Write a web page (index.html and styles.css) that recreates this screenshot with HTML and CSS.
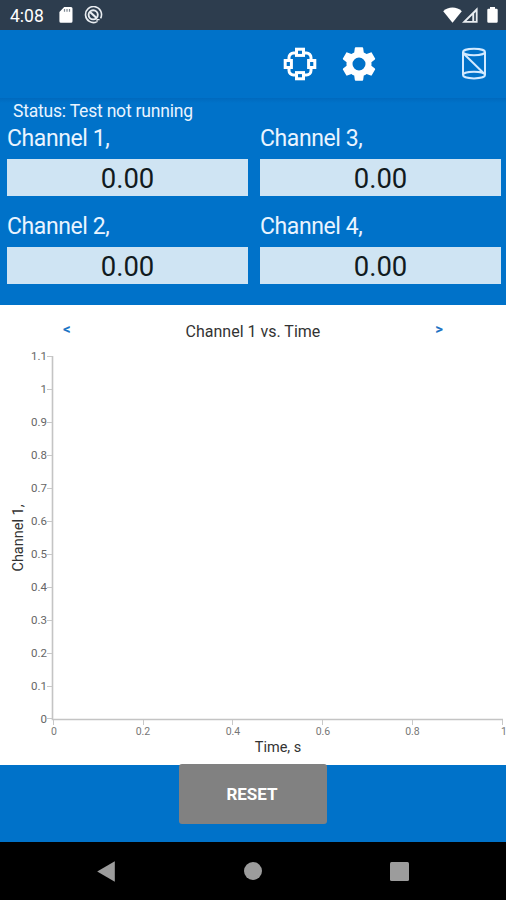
FILE: index.html
```html
<!DOCTYPE html>
<html lang="en">
<head>
  <meta charset="UTF-8">
  <meta name="viewport" content="width=device-width, initial-scale=1.0">
  <title>Channel Monitor</title>
  <link rel="stylesheet" href="styles.css">
</head>
<body>
  <div class="screen">
    <div class="status-bar">
      <span class="clock">4:08</span>
      <svg class="icon-sd" width="14" height="16" viewBox="0 0 14 16">
        <path fill="#fff" d="M5.2 0H12a1.500 1.500 0 0 1 1.500 1.500v12.800a1.500 1.500 0 0 1-1.500 1.500H1.900a1.500 1.500 0 0 1-1.500-1.500V5z"/>
        <path stroke="#7d8791" stroke-width="1.200" d="M5.500 2v2.800M8 2v2.800M10.500 2v2.800"/>
      </svg>
      <svg class="icon-sync" width="19" height="18" viewBox="0 0 19 18" fill="none" stroke="#e9edf1">
        <path stroke-width="1.600" d="M12.500 16A8 8 0 1 1 16.600 12.300"/>
        <circle cx="9.200" cy="8.800" r="4.600" stroke-width="1.900"/>
        <path stroke-width="2.200" d="M6 6l6.600 6"/>
        <path stroke-width="1.200" d="M13 16.200v-2.600h2.600"/>
      </svg>
      <div class="signals">
        <svg width="19" height="16" viewBox="0 0 19 16"><path fill="#fff" d="M9.500 15.700L.2 4.300C5 -.7 14-.7 18.800 4.300z"/></svg>
        <svg width="16" height="16" viewBox="0 0 16 16"><path fill="#e9edf1" fill-rule="evenodd" d="M0 15.800L15.600.2v15.600zM10.300 8.200L4.500 14h5.800zM12.200 6.500v7.500h1.600V5z"/></svg>
        <svg class="icon-battery" width="11" height="16" viewBox="0 0 11 16"><path fill="#fff" d="M3 0h5v1.800h1.500a1.200 1.200 0 0 1 1.200 1.200v11.500a1.200 1.200 0 0 1-1.200 1.200h-8A1.200 1.200 0 0 1 .3 14.500V3a1.200 1.200 0 0 1 1.200-1.200H3z"/></svg>
      </div>
    </div>

    <div class="toolbar">
      <!-- connect -->
      <svg class="icon-connect" width="34" height="34" viewBox="0 0 34 34" fill="none" stroke="#fff" stroke-width="3">
        <path d="M12.500 6H10.500a4.500 4.500 0 0 0-4.500 4.500V12.500M21.500 6h2a4.500 4.500 0 0 1 4.500 4.500V12.500M12.500 28H10.500a4.500 4.500 0 0 1-4.500-4.500V21.500M21.500 28h2a4.500 4.500 0 0 0 4.500-4.500V21.500"/>
        <rect x="13.500" y="2.200" width="7" height="6.200"/>
        <rect x="13.500" y="25.600" width="7" height="6.200"/>
        <rect x="2.200" y="13.500" width="6.200" height="7"/>
        <rect x="25.600" y="13.500" width="6.200" height="7"/>
      </svg>
      <!-- settings -->
      <svg class="icon-settings" width="40" height="40" viewBox="0 0 24 24">
        <path fill="#fff" d="M19.430 12.980c.04-.32.07-.64.07-.98s-.03-.66-.07-.98l2.110-1.650c.19-.15.24-.42.12-.64l-2-3.460c-.12-.22-.39-.3-.61-.22l-2.490 1c-.52-.4-1.080-.73-1.690-.98l-.38-2.650C14.460 2.180 14.250 2 14 2h-4c-.25 0-.46.18-.49.42l-.38 2.650c-.61.25-1.170.59-1.690.98l-2.490-1c-.23-.09-.49 0-.61.22l-2 3.460c-.13.22-.07.49.12.64l2.110 1.650c-.04.32-.07.65-.07.98s.03.66.07.98l-2.110 1.650c-.19.15-.24.42-.12.64l2 3.460c.12.22.39.3.61.22l2.490-1c.52.4 1.080.73 1.690.98l.38 2.650c.03.24.24.42.49.42h4c.25 0 .46-.18.49-.42l.38-2.650c.61-.25 1.170-.59 1.690-.98l2.490 1c.23.09.49 0 .61-.22l2-3.460c.12-.22.07-.49-.12-.64l-2.110-1.650zM12 15.900a3.900 3.900 0 1 1 0-7.800 3.900 3.900 0 0 1 0 7.800z"/>
      </svg>
      <!-- specimen -->
      <svg class="icon-specimen" width="26" height="34" viewBox="0 0 26 34" fill="none" stroke="#d3eaff" stroke-width="2">
        <ellipse cx="13" cy="5" rx="11" ry="3.200"/>
        <path d="M2 5v23c0 4.500 22 4.500 22 0V5M2 28c0-4.500 22-4.500 22 0M2.500 6.500l21 20.500"/>
      </svg>
    </div>

    <div class="readings">
      <div class="test-status">Status: Test not running</div>
      <div class="channels">
        <div class="channel">
          <div class="channel-name">Channel 1,</div>
          <div class="channel-value">0.00</div>
        </div>
        <div class="channel">
          <div class="channel-name">Channel 3,</div>
          <div class="channel-value">0.00</div>
        </div>
        <div class="channel">
          <div class="channel-name">Channel 2,</div>
          <div class="channel-value">0.00</div>
        </div>
        <div class="channel">
          <div class="channel-name">Channel 4,</div>
          <div class="channel-value">0.00</div>
        </div>
      </div>
    </div>

    <div class="chart-panel">
      <div class="chart-header">
        <span class="chart-arrow">&lt;</span>
        <span class="chart-title">Channel 1 vs. Time</span>
        <span class="chart-arrow">&gt;</span>
      </div>
      <svg class="chart" width="506" height="410" viewBox="0 350 506 410">
        <path class="axis" d="M52.500 356V719.500H503"/>
        <path class="tick" d="M47 356.500h5M47 389.500h5M47 422.500h5M47 455.500h5M47 488.500h5M47 521.500h5M47 554.500h5M47 587.500h5M47 620.500h5M47 653.500h5M47 686.500h5M47 718.500h5"/>
        <path class="tick" d="M53.500 720v5M143.500 720v5M232.500 720v5M322.500 720v5M412.500 720v5M502.500 720v5"/>
        <g class="labels-y">
          <text x="47" y="360">1.1</text>
          <text x="47" y="393">1</text>
          <text x="47" y="426">0.9</text>
          <text x="47" y="459">0.8</text>
          <text x="47" y="492">0.7</text>
          <text x="47" y="525">0.6</text>
          <text x="47" y="558">0.5</text>
          <text x="47" y="591">0.4</text>
          <text x="47" y="624">0.3</text>
          <text x="47" y="657">0.2</text>
          <text x="47" y="690">0.1</text>
          <text x="47" y="723">0</text>
        </g>
        <g class="labels-x">
          <text x="54" y="734.500">0</text>
          <text x="143" y="734.500">0.2</text>
          <text x="233" y="734.500">0.4</text>
          <text x="323" y="734.500">0.6</text>
          <text x="412.500" y="734.500">0.8</text>
          <text x="504" y="734.500">1</text>
        </g>
        <text class="axis-title" x="278" y="751.500">Time, s</text>
        <text class="axis-title" transform="translate(23 538) rotate(-90)">Channel 1,</text>
      </svg>
    </div>

    <div class="footer">
      <button class="reset-btn">RESET</button>
    </div>

    <div class="nav-bar">
      <svg width="18" height="21" viewBox="0 0 18 21"><path fill="#9c9c9c" d="M17.800.3v20.400L.2 10.500z"/></svg>
      <svg width="18" height="18" viewBox="0 0 18 18"><circle cx="9" cy="9" r="9" fill="#9c9c9c"/></svg>
      <svg width="19" height="19" viewBox="0 0 19 19"><rect width="19" height="19" rx="1.500" fill="#9c9c9c"/></svg>
    </div>
  </div>
</body>
</html>
```

FILE: styles.css
```css
html, body {
  margin: 0;
  padding: 0;
  background: #000;
  font-family: Roboto, 'Noto Sans', sans-serif;
}
svg {
  display: block;
  flex: none;
}
.screen {
  width: 506px;
  height: 900px;
  display: flex;
  flex-direction: column;
  overflow: hidden;
}
.status-bar {
  height: 30px;
  box-sizing: border-box;
  padding: 0 8px 0 10px;
  display: flex;
  align-items: center;
  background: #2d3d4e;
  color: #fff;
}
.clock {
  width: 49px;
  font-size: 17.5px;
  line-height: 30px;
  padding-top: 2px;
}
.icon-sync {
  margin-left: 11px;
}
.signals {
  display: flex;
  margin-left: auto;
}
.icon-battery {
  margin-left: 9px;
}
.toolbar {
  height: 68px;
  box-sizing: border-box;
  padding-right: 19px;
  display: flex;
  align-items: center;
  justify-content: flex-end;
  background: #0072c9;
}
.icon-connect {
  margin-right: 22px;
}
.icon-settings {
  margin-right: 82px;
}
.readings {
  height: 207px;
  background: linear-gradient(#0069bd, #0072c9 5px);
  color: #e9f4ff;
}
.test-status {
  height: 27px;
  padding-left: 13px;
  font-size: 17.5px;
  letter-spacing: -0.2px;
  line-height: 27px;
}
.channels {
  display: grid;
  grid-template-columns: 241px 241px;
  column-gap: 12px;
  row-gap: 17px;
  padding-left: 7px;
}
.channel-name {
  height: 34px;
  font-size: 23px;
  letter-spacing: -0.4px;
  line-height: 27px;
}
.channel-value {
  height: 37px;
  background: #cfe4f3;
  color: #111a20;
  font-size: 27.5px;
  line-height: 39px;
  text-align: center;
}
.chart-panel {
  height: 460px;
  background: #fff;
}
.chart-header {
  height: 45px;
  box-sizing: border-box;
  padding: 10px 63px 0;
  display: flex;
  justify-content: space-between;
}
.chart-arrow {
  color: #1c74c4;
  font-size: 15px;
  font-weight: 700;
  line-height: 28px;
}
.chart-title {
  color: #333;
  font-size: 16px;
  line-height: 34px;
}
.axis {
  fill: none;
  stroke: #c4c4c4;
  stroke-width: 1.6;
}
.tick {
  stroke: #c8c8c8;
}
.labels-y {
  font-size: 11.5px;
  fill: #666;
  text-anchor: end;
}
.labels-x {
  font-size: 10.5px;
  fill: #777;
  text-anchor: middle;
}
.axis-title {
  font-size: 14.5px;
  fill: #333;
  text-anchor: middle;
}
.footer {
  height: 77px;
  padding-left: 179px;
  background: #0072c9;
}
.reset-btn {
  display: block;
  width: 148px;
  height: 60px;
  margin-top: -1px;
  padding: 0 2px 0 0;
  border: 0;
  border-radius: 3px;
  background: #818181;
  color: #fff;
  font-family: inherit;
  font-size: 17px;
  font-weight: 700;
}
.nav-bar {
  height: 58px;
  box-sizing: border-box;
  padding: 0 97px 0 97px;
  display: flex;
  align-items: center;
  justify-content: space-between;
  background: #000;
}
```
